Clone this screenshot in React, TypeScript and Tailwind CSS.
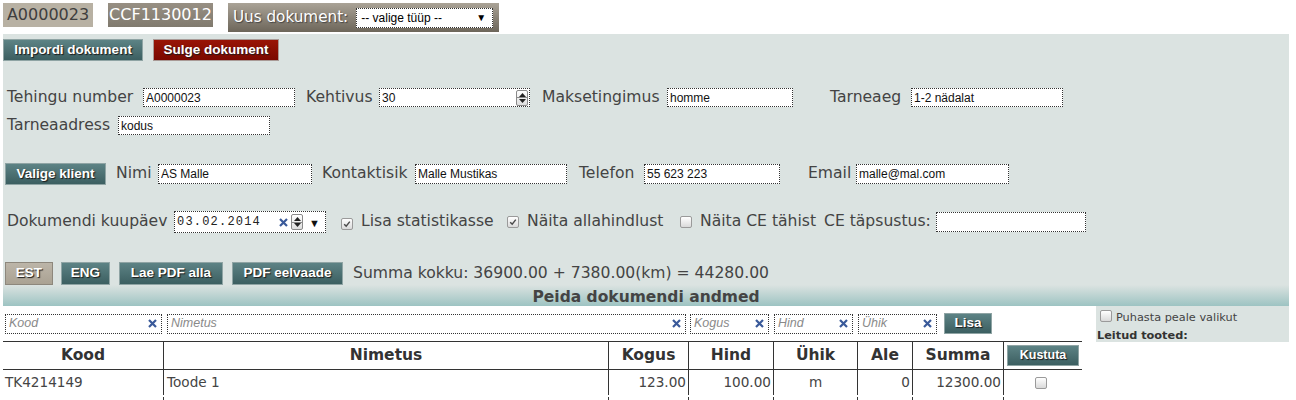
import React from "react";

const LABEL = "font-['DejaVu_Sans',sans-serif] text-[15.6px] text-[#444] whitespace-nowrap leading-none";
const INPUT =
  "h-[19px] border border-dotted border-[#333] bg-white px-[2px] font-['Liberation_Sans',Arial,sans-serif] text-[12px] text-[#111] outline-none";

type BtnKind = "teal" | "red" | "tan";

const btnKinds: Record<BtnKind, string> = {
  teal: "bg-gradient-to-b from-[#5d8385] to-[#3c5f61] border-[#8fa4a4]",
  red: "bg-gradient-to-b from-[#991406] to-[#7a0800] border-[#a99a96]",
  tan: "bg-gradient-to-b from-[#bcb5a8] to-[#aaa293] border-[#8d877c]",
};

// Bold white button with a dark text shadow
const Btn = ({ children, kind = "teal", w, h = "h-[23px]" }: { children: React.ReactNode; kind?: BtnKind; w: string; h?: string }) => (
  <button
    className={`${w} ${h} ${btnKinds[kind]} flex shrink-0 items-center justify-center border font-['Liberation_Sans',Arial,sans-serif] text-[13.5px] font-bold text-white [text-shadow:1px_1px_1px_#1a1a1a]`}
  >
    {children}
  </button>
);

const Check = ({ checked }: { checked?: boolean }) => (
  <span className="inline-flex h-[12px] w-[12px] shrink-0 items-center justify-center rounded-[2px] border border-[#9a9a9a] bg-gradient-to-b from-white to-[#dadada]">
    {checked && (
      <svg viewBox="0 0 10 10" className="h-[8px] w-[8px]">
        <path d="M1.5 5.2 L4 7.8 L8.5 2" fill="none" stroke="#4a4a4a" strokeWidth="1.8" />
      </svg>
    )}
  </span>
);

const Spinner = () => (
  <span className="flex h-[16px] w-[12px] shrink-0 flex-col items-center justify-between rounded-[2px] border border-[#8a8a8a] bg-gradient-to-b from-white to-[#dedede] py-[2px]">
    <svg width="7" height="4" viewBox="0 0 7 4">
      <path d="M0 4 L3.5 0 L7 4Z" fill="#222" />
    </svg>
    <span className="h-px w-full bg-[#8a8a8a]" />
    <svg width="7" height="4" viewBox="0 0 7 4">
      <path d="M0 0 L3.5 4 L7 0Z" fill="#222" />
    </svg>
  </span>
);

const ClearX = () => (
  <svg width="9" height="9" viewBox="0 0 9 9" className="shrink-0">
    <path d="M1 1 L8 8 M8 1 L1 8" stroke="#3a5a9a" strokeWidth="2.2" />
  </svg>
);

const Field = ({ label, lw, iw, value, ml }: { label: string; lw: string; iw: string; value: string; ml: string }) => (
  <>
    <span className={`${LABEL} ${lw} ${ml} shrink-0`}>{label}</span>
    <input readOnly defaultValue={value} className={`${INPUT} ${iw} shrink-0`} />
  </>
);

const FilterBox = ({ placeholder, w, ml }: { placeholder: string; w: string; ml: string }) => (
  <div className={`${w} ${ml} flex h-[20px] shrink-0 items-center justify-between border border-dotted border-[#333] bg-white pl-[3px] pr-[4px]`}>
    <span className="font-['Liberation_Sans',Arial,sans-serif] text-[12.5px] italic text-[#8a8a8a]">{placeholder}</span>
    <ClearX />
  </div>
);

const cols = ["w-[160px]", "w-[445px]", "w-[80px]", "w-[85px]", "w-[84px]", "w-[55px]", "w-[91px]", "w-[79px]"];
const headers = ["Kood", "Nimetus", "Kogus", "Hind", "Ühik", "Ale", "Summa"];

const App = () => {
  return (
    <div className="h-[400px] w-[1296px] overflow-hidden bg-white">
      {/* Top: document ids and new document type */}
      <div className="flex items-start pt-[3px]">
        <div className="ml-[3px] flex h-[24px] w-[90px] items-center justify-center bg-[#b8b1a3] font-['DejaVu_Sans',sans-serif] text-[16px] text-[#3e3e3e]">
          A0000023
        </div>
        <div className="ml-[15px] flex h-[24px] w-[105px] items-center justify-center bg-gradient-to-b from-[#978f83] to-[#807a6e] font-['DejaVu_Sans',sans-serif] text-[16px] text-white">
          CCF1130012
        </div>
        <div className="ml-[15px] flex h-[29px] w-[271px] items-center bg-gradient-to-b from-[#aaa397] to-[#6d665a] pl-[5px]">
          <span className="font-['DejaVu_Sans',sans-serif] text-[15.2px] text-white [text-shadow:1px_1px_1px_#444]">Uus dokument:</span>
          <div className="ml-[8px] flex h-[20px] w-[137px] items-center justify-between border border-dotted border-[#333] bg-white pl-[4px] pr-[6px] font-['Liberation_Sans',Arial,sans-serif] text-[12px] text-black">
            <span>-- valige tüüp --</span>
            <span className="text-[10px]">▼</span>
          </div>
        </div>
      </div>

      {/* Document data panel */}
      <div className="ml-[3px] mt-[2px] w-[1286px] bg-[#dbe3e1]">
        <div className="flex pt-[5px]">
          <Btn w="w-[140px] ml-[0px]" h="h-[22px]">Impordi dokument</Btn>
          <Btn kind="red" w="w-[126px] ml-[10px]" h="h-[22px]">Sulge dokument</Btn>
        </div>

        <div className="mt-[27px] flex items-center">
          <Field label="Tehingu number" ml="ml-[4px]" lw="w-[136px]" iw="w-[152px]" value="A0000023" />
          <span className={`${LABEL} ml-[11px] w-[73px]`}>Kehtivus</span>
          <div className="flex h-[19px] w-[151px] shrink-0 items-center justify-between border border-dotted border-[#333] bg-white pl-[2px] pr-[1px] font-['Liberation_Sans',Arial,sans-serif] text-[12px] text-[#111]">
            <span>30</span>
            <Spinner />
          </div>
          <Field label="Maksetingimus" ml="ml-[12px]" lw="w-[125px]" iw="w-[126px]" value="homme" />
          <Field label="Tarneaeg" ml="ml-[37px]" lw="w-[81px]" iw="w-[152px]" value="1-2 nädalat" />
        </div>

        <div className="mt-[9px] flex items-center">
          <Field label="Tarneaadress" ml="ml-[4px]" lw="w-[111px]" iw="w-[152px]" value="kodus" />
        </div>

        <div className="mt-[28px] flex h-[22px] items-center">
          <Btn w="w-[101px] ml-[2px]" h="h-[22px]">Valige klient</Btn>
          <Field label="Nimi" ml="ml-[10px]" lw="w-[42px]" iw="w-[154px] h-[20px]" value="AS Malle" />
          <Field label="Kontaktisik" ml="ml-[10px]" lw="w-[93px]" iw="w-[152px] h-[20px]" value="Malle Mustikas" />
          <Field label="Telefon" ml="ml-[12px]" lw="w-[65px]" iw="w-[136px] h-[20px]" value="55 623 223" />
          <Field label="Email" ml="ml-[28px]" lw="w-[48px]" iw="w-[153px] h-[20px]" value="malle@mal.com" />
        </div>

        <div className="mt-[26px] flex h-[22px] items-center">
          <span className={`${LABEL} ml-[4px] w-[167px]`}>Dokumendi kuupäev</span>
          <div className="flex h-[22px] w-[152px] shrink-0 items-center border border-dotted border-[#333] bg-white pl-[2px] pr-[5px]">
            <span className="font-['Liberation_Mono',monospace] text-[12px] tracking-[1.2px] text-[#222]">03.02.2014</span>
            <span className="ml-auto mr-[3px]">
              <ClearX />
            </span>
            <Spinner />
            <span className="ml-[6px] text-[11px] leading-none text-[#111]">▼</span>
          </div>
          <span className="ml-[15px]">
            <Check checked />
          </span>
          <span className={`${LABEL} ml-[8px] w-[146px]`}>Lisa statistikasse</span>
          <Check checked />
          <span className={`${LABEL} ml-[8px] w-[153px]`}>Näita allahindlust</span>
          <Check />
          <span className={`${LABEL} ml-[8px] w-[124px]`}>Näita CE tähist</span>
          <span className={`${LABEL} w-[112px]`}>CE täpsustus:</span>
          <input readOnly className={`${INPUT} w-[150px] h-[20px]`} />
        </div>

        <div className="mt-[29px] flex h-[23px] items-center">
          <Btn kind="tan" w="w-[48px] ml-[2px]">EST</Btn>
          <Btn w="w-[49px] ml-[8px]">ENG</Btn>
          <Btn w="w-[104px] ml-[9px]">Lae PDF alla</Btn>
          <Btn w="w-[111px] ml-[9px]">PDF eelvaade</Btn>
          <span className={`${LABEL} ml-[10px]`}>Summa kokku: 36900.00 + 7380.00(km) = 44280.00</span>
        </div>

        {/* Toggle header */}
        <div className="flex h-[21px] items-end justify-center bg-gradient-to-b from-[#dbe3e1] to-[#9dc3c2] pb-[1px]">
          <span className="font-['DejaVu_Sans',sans-serif] text-[15.5px] font-bold leading-none text-[#444]">Peida dokumendi andmed</span>
        </div>
      </div>

      {/* Products */}
      <div className="flex items-start">
        <div className="ml-[3px] w-[1079px]">
          <div className="mt-[7px] flex items-center">
            <FilterBox placeholder="Kood" w="w-[157px]" ml="ml-[2px]" />
            <FilterBox placeholder="Nimetus" w="w-[519px]" ml="ml-[5px]" />
            <FilterBox placeholder="Kogus" w="w-[79px]" ml="ml-[4px]" />
            <FilterBox placeholder="Hind" w="w-[79px]" ml="ml-[5px]" />
            <FilterBox placeholder="Ühik" w="w-[79px]" ml="ml-[5px]" />
            <Btn w="w-[48px] ml-[7px]" h="h-[21px]">Lisa</Btn>
          </div>

          <div className="mt-[7px] font-['DejaVu_Sans',sans-serif] text-[#444]">
            <div className="flex h-[29px] border-y border-[#333]">
              {headers.map((h, i) => (
                <div
                  key={h}
                  className={`${cols[i]} flex items-center justify-center text-[15.5px] font-bold text-[#333] ${i > 0 ? "border-l border-[#333]" : ""}`}
                >
                  {h}
                </div>
              ))}
              <div className={`${cols[7]} flex items-center justify-center border-l border-[#333]`}>
                <Btn w="w-[72px]" h="h-[21px]">
                  <span className="text-[12.5px]">Kustuta</span>
                </Btn>
              </div>
            </div>

            <div className="flex h-[25px] text-[13.6px]">
              <div className={`${cols[0]} flex items-center pl-[2px]`}>TK4214149</div>
              <div className={`${cols[1]} flex items-center border-l border-[#333] pl-[3px]`}>Toode 1</div>
              <div className={`${cols[2]} flex items-center justify-end border-l border-[#333] pr-[2px]`}>123.00</div>
              <div className={`${cols[3]} flex items-center justify-end border-l border-[#333] pr-[2px]`}>100.00</div>
              <div className={`${cols[4]} flex items-center justify-center border-l border-[#333]`}>m</div>
              <div className={`${cols[5]} flex items-center justify-end border-l border-[#333] pr-[2px]`}>0</div>
              <div className={`${cols[6]} flex items-center justify-end border-l border-[#333] pr-[2px]`}>12300.00</div>
              <div className={`${cols[7]} flex items-center justify-center border-l border-[#333] pr-[4px]`}>
                <Check />
              </div>
            </div>

            <div className="mt-[2px] flex h-[20px]">
              {cols.map((c, i) => (
                <div key={c + i} className={`${c} ${i > 0 ? "border-l border-[#333]" : ""}`} />
              ))}
            </div>
          </div>
        </div>

        <div className="ml-[14px] flex h-[36px] w-[193px] flex-col bg-[#dbe3e1] pl-[1px] pt-[4px] font-['DejaVu_Sans',sans-serif] text-[11.3px] leading-none text-[#444]">
          <div className="flex items-center">
            <span className="ml-[3px]">
              <Check />
            </span>
            <span className="ml-[4px]">Puhasta peale valikut</span>
          </div>
          <span className="mt-[6px] font-bold text-[#333]">Leitud tooted:</span>
        </div>
      </div>
    </div>
  );
};

export default App;
